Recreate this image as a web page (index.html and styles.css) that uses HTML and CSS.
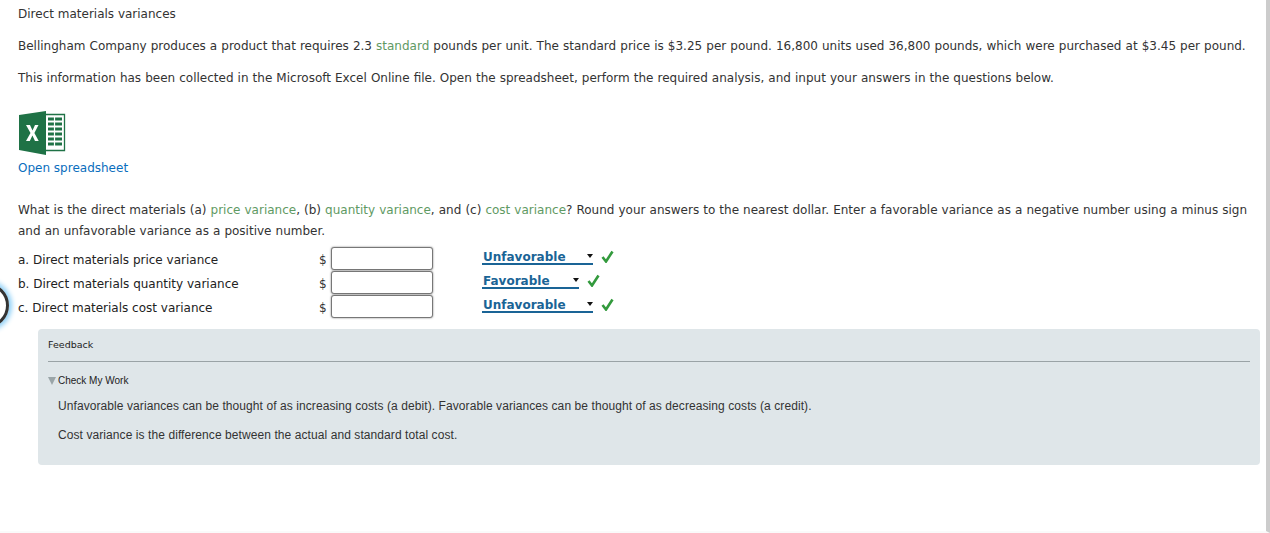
FILE: index.html
```html
<!DOCTYPE html>
<html lang="en">
<head>
    <meta charset="UTF-8">
    <title>Direct materials variances</title>
    <link rel="stylesheet" href="styles.css">
</head>
<body>
    <div class="page">
        <div class="focus-ring"></div>
        <p class="title">Direct materials variances</p>
        <p class="para">Bellingham Company produces a product that requires 2.3 <span class="term">standard</span> pounds per unit. The standard price is $3.25 per pound. 16,800 units used 36,800 pounds, which were purchased at $3.45 per pound.</p>
        <p class="para">This information has been collected in the Microsoft Excel Online file. Open the spreadsheet, perform the required analysis, and input your answers in the questions below.</p>

        <div class="sheet">
            <svg class="excel-icon" width="47" height="44" viewBox="0 0 47 44">
                <path d="M26 3.500H45.500V39.500H26Z" fill="#fff" stroke="#1f7246" stroke-width="1.300"/>
                <path d="M29 8H43M29 13H43M29 18H43M29 23H43M29 28H43M29 33H43" stroke="#1f7246" stroke-width="3"/>
                <path d="M35.500 6V35" stroke="#fff" stroke-width="1.200"/>
                <path d="M0 4L27 0V44L0 39Z" fill="#1f7246"/>
                <path d="M7 14H11L13.500 19.500L16 14H19.500L15.400 22L19.700 30H16L13.400 24.500L10.800 30H7L11.500 22Z" fill="#fff"/>
            </svg>
            <a class="sheet-link" href="#">Open spreadsheet</a>
        </div>

        <p class="para question">What is the direct materials (a) <span class="term">price variance</span>, (b) <span class="term">quantity variance</span>, and (c) <span class="term">cost variance</span>? Round your answers to the nearest dollar. Enter a favorable variance as a negative number using a minus sign and an unfavorable variance as a positive number.</p>

        <div class="answers">
            <div class="answer-row">
                <span class="answer-label">a. Direct materials price variance</span>
                <span class="dollar">$</span>
                <input class="amount" type="text">
                <span class="pick pick-wide">Unfavorable<i class="arrow"></i></span>
                <svg class="check" width="13" height="13" viewBox="0 0 13 13"><path d="M1.500 7L5 11.500L11.500 1.500" fill="none" stroke="#339a3d" stroke-width="2.600"/></svg>
            </div>
            <div class="answer-row">
                <span class="answer-label">b. Direct materials quantity variance</span>
                <span class="dollar">$</span>
                <input class="amount" type="text">
                <span class="pick pick-narrow">Favorable<i class="arrow"></i></span>
                <svg class="check" width="13" height="13" viewBox="0 0 13 13"><path d="M1.500 7L5 11.500L11.500 1.500" fill="none" stroke="#339a3d" stroke-width="2.600"/></svg>
            </div>
            <div class="answer-row">
                <span class="answer-label">c. Direct materials cost variance</span>
                <span class="dollar">$</span>
                <input class="amount" type="text">
                <span class="pick pick-wide">Unfavorable<i class="arrow"></i></span>
                <svg class="check" width="13" height="13" viewBox="0 0 13 13"><path d="M1.500 7L5 11.500L11.500 1.500" fill="none" stroke="#339a3d" stroke-width="2.600"/></svg>
            </div>
        </div>

        <div class="feedback">
            <div class="feedback-title">Feedback</div>
            <div class="feedback-check"><i class="tri"></i>Check My Work</div>
            <p class="feedback-text feedback-first">Unfavorable variances can be thought of as increasing costs (a debit). Favorable variances can be thought of as decreasing costs (a credit).</p>
            <p class="feedback-text">Cost variance is the difference between the actual and standard total cost.</p>
        </div>
    </div>
</body>
</html>
```

FILE: styles.css
```css
html, body {
    margin: 0;
    height: 100%;
    overflow: hidden;
}
body {
    background: #fff;
    font-family: "DejaVu Sans", sans-serif;
    font-size: 12px;
    color: #333;
}
.page {
    position: relative;
    box-sizing: border-box;
    height: 533px;
    padding: 6px 10px 0 18px;
    border-right: 4px solid #ccc;
    border-bottom: 2px solid #fafafa;
}
.title {
    margin: 0 0 14px;
    line-height: 16px;
}
.para {
    margin: 0 0 11px;
    line-height: 21px;
    word-spacing: 0.250px;
}
.term {
    color: #5f9a63;
}
.sheet {
    margin-top: 22px;
}
.excel-icon {
    display: block;
    margin-left: 1px;
    height: 44px;
}
.sheet-link {
    display: block;
    margin-top: 5px;
    line-height: 16px;
    color: #0a6ebd;
    text-decoration: none;
}
.question {
    margin: 24px 0 5px;
}
.answer-row {
    display: flex;
    align-items: flex-start;
    height: 24px;
}
.answer-label {
    width: 301px;
    margin-top: 5px;
    line-height: 16px;
    color: #222;
}
.dollar {
    width: 12px;
    margin-top: 5px;
    line-height: 16px;
}
.amount {
    box-sizing: border-box;
    width: 102px;
    height: 23px;
    margin: 0;
    padding: 0;
    background: #fff;
    border: 1px solid #777;
    border-radius: 3px;
    box-shadow: 0 0 2px #777;
}
.pick {
    position: relative;
    box-sizing: border-box;
    display: block;
    height: 18px;
    margin-left: 49px;
    padding: 2px 0 0 1px;
    font-weight: bold;
    line-height: 16px;
    color: #1a6496;
    border-bottom: 2px solid #1a6496;
}
.pick-wide {
    width: 111px;
}
.pick-narrow {
    width: 97px;
}
.arrow {
    position: absolute;
    right: 0;
    top: 7px;
    border-left: 3.500px solid transparent;
    border-right: 3.500px solid transparent;
    border-top: 4px solid #111;
}
.check {
    margin: 3px 0 0 8px;
}
.feedback {
    box-sizing: border-box;
    width: 1222px;
    height: 136px;
    margin: 10px 0 0 20px;
    padding: 10px 10px 0;
    background: #dfe6e9;
    border-radius: 4px;
    color: #333;
}
.feedback-title {
    padding-bottom: 10px;
    font-size: 9.500px;
    line-height: 12px;
    color: #222;
    border-bottom: 1px solid #9aa3a6;
}
.feedback-check {
    display: flex;
    align-items: center;
    margin-top: 13px;
    font-family: "Liberation Sans", sans-serif;
    font-size: 10px;
    line-height: 12px;
    color: #222;
}
.tri {
    margin-right: 2px;
    border-left: 4px solid transparent;
    border-right: 4px solid transparent;
    border-top: 8px solid #9aa5a8;
}
.feedback-text {
    margin: 0 0 0 10px;
    padding-top: 11px;
    font-family: "Liberation Sans", sans-serif;
    font-size: 12px;
    line-height: 18px;
    letter-spacing: 0.080px;
}
.feedback-first {
    padding-top: 10px;
}
.focus-ring {
    position: absolute;
    left: -36px;
    top: 283px;
    width: 39px;
    height: 39px;
    border: 3.500px solid #333;
    border-radius: 50%;
    box-shadow: 0 0 5px 3px #8fd0f7;
}
```
